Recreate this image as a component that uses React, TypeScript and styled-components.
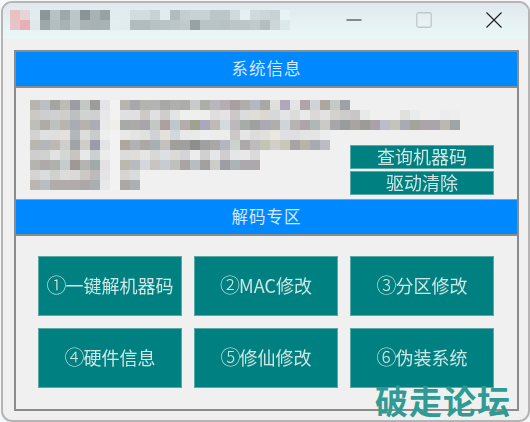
import React from 'react';
import styled, {createGlobalStyle} from 'styled-components';

const GlobalStyle = createGlobalStyle`
  html, body {
    margin: 0;
    padding: 0;
    background: #f4f8f8;
  }
`;

const Window = styled.div`
  position: relative;
  box-sizing: border-box;
  width: 529px;
  height: 421px;
  margin: 1px 0 0 1px;
  border: 2px solid #b6b4b4;
  border-radius: 11px;
  overflow: hidden;
  background: #f0f0f0;
  font-family: "Noto Sans CJK SC", "Liberation Sans", sans-serif;
`;

const TitleBar = styled.div`
  display: flex;
  align-items: stretch;
  justify-content: space-between;
  height: 36px;
  background: linear-gradient(#dfe8ea, #e6f1f4 50%, #ebf6f9);
`;

const TitleBlur = styled.div`
  display: flex;
  flex-direction: column;
  padding: 7px 0 0 7px;
`;

const WindowControls = styled.div`
  display: flex;
  margin-right: -1px;
`;

const ControlButton = styled.div`
  display: flex;
  align-items: center;
  justify-content: center;
  width: 70px;
  padding-bottom: 3px;
`;

const Panel = styled.div`
  box-sizing: border-box;
  height: 361px;
  margin: 11px 9px 0 11px;
  border: 2px solid #8b8b8b;
`;

const SectionHeader = styled.div<{$first?: boolean}>`
  display: flex;
  align-items: center;
  justify-content: center;
  box-sizing: border-box;
  height: ${p => (p.$first ? '36px' : '37px')};
  padding-bottom: 2px;
  background: #0088ff;
  background-clip: padding-box;
  color: #d4e9ff;
  font-size: 16.5px;
  letter-spacing: 1px;
  border-bottom: 2px solid #8b8b8b;
  border-top: ${p => (p.$first ? '0' : '1px solid #9a9a9a')};
`;

const InfoArea = styled.div`
  display: grid;
  box-sizing: border-box;
  height: 111px;
  padding: 12px 23px 4px 14px;
`;

const Mosaic = styled.div`
  grid-area: 1 / 1;
  display: flex;
  flex-direction: column;
`;

const MosaicRow = styled.div`
  display: flex;
`;

const Cell = styled.span.attrs<{$tone: string}>(p => ({
	style: {background: `#${p.$tone}`},
}))<{$tone: string}>`
  flex: none;
  width: 10px;
  height: 10px;
`;

const ActionStack = styled.div`
  grid-area: 1 / 1;
  align-self: end;
  justify-self: end;
  display: flex;
  flex-direction: column;
  gap: 2px;
  width: 144px;
`;

const TealButton = styled.div<{$tall?: boolean}>`
  display: flex;
  align-items: center;
  justify-content: center;
  box-sizing: border-box;
  height: ${p => (p.$tall ? '60px' : '24px')};
  padding-bottom: 3px;
  background: #008080;
  border: 1px solid #5aa9a6;
  color: #cfe6e4;
  font-size: 18px;
  white-space: nowrap;
  filter: blur(0.25px);
`;

const CircledDigit = styled.span`
  font-size: 20px;
  width: 19px;
  text-align: center;
  font-weight: 300;
`;

const ButtonGrid = styled.div`
  display: grid;
  grid-template-columns: repeat(3, 144px);
  grid-auto-rows: 60px;
  gap: 12px;
  padding: 20px 0 0 22px;
`;

const Watermark = styled.div`
  position: absolute;
  right: 17px;
  bottom: 1px;
  color: #2f9b94;
  font-size: 33px;
  font-weight: 700;
  line-height: 38px;
  letter-spacing: 1px;
  white-space: nowrap;
`;

const titleRows = [
	'eac0c4 e8d4d6 e0ecee 8c9698 b8c2c4 9ea8aa bcc6c8 8a9496 a8b2b4 98a2a2 e0ecee e0ecee d0dcde d0dcde c8d2d4 e0ecee b0bcbe c4ced0 c8d2d4 c8d2d4 bcc6c8 bcc6c8 d0dadc e4f0f2 d0dade ccd6d8 c8d2d4 e6f2f4',
	'e6c4c8 e8b0b4 e0e8ea 9ca8aa b4bec0 a8b4b4 bcc6c8 aab4b6 a8b2b4 a8b4b4 e2eef0 e0ecee b0bcbe b0bcbe b8c2c4 b8c4c6 bcc6c8 c0cacc 98a2a2 b8c4c6 b8c4c6 b8c2c4 bcc6c8 bcc6c8 c0cacc b4bec0 ccd6d8 dce8ea',
];

// left column (8 cells), gap cell, then the value column
const infoRows = [
	'b8b4ae bcc0c6 a4a4a0 bcbcb4 9c9ca4 c4c8c4 9c9c9c e4e4e8 f2f2f2 b8b4ae a8a8ac b4b4ae b4b4b4 a8a8a6 b0aeae acacaa c8cacc acaea8 b8b8bc b4aeb4 a8a0a0 b0aeaa b4b8c0 a8a8a8 e0e0da b0a8b8 e2e4e6 b0a4a8 d0d4d6 aca8a0 c4c8c6 a0a0a8',
	'ccc8c4 ccced0 ced0d2 d0cec8 bcc0c0 d0d4d0 d0d0d0 e8e8ea f2f2f2 e0e0e0 e0e0e0 ccc9c6 dfe0e2 cdcdcb e2e4e6 eef0ee eef0ee eeeeea e0dede e4e4e4 ccc8c8 dadcde e0dcd8 dcd8d0 d6d8dc e4e4e4 dcdcda e8eaea dcd8d8 e2e2e2 d4d2ce cccccc c8c6c8 e8eaea f0f0f0 f0f0f0 f0f0f0 e0e0dc e8ecec f0f0f0 f0f0f0 ececec eeeeee',
	'bcc0b8 b0aaa8 bcc2c0 b8b4b0 a8acb4 b8b2ac acacb4 eaeaea f0eeea a8aaaa acaaa8 a8a4ac c4c8c4 aca0a0 bcc8cc b4acac a0a290 aca8bc c0bab4 d4dae0 bcb8bc a8aca8 a0a0a0 aca8b4 b0aeaa ced4d8 b8b2b0 b0a4a8 aeb8b6 cccac6 a8a6a8 989c9c a8a4a0 9c9c96 aaa0a8 bcbccc c4c4bc aaaab4 a4a49a aca4a8 aca4ac bcb8b0 a0a4a4',
	'd4d2d0 dee0e2 e0dede e4e0dc b0b8bc dcdcd8 c8cacc eeeeee f2f2f2 e8e8e8 e4e4e4 e0e0dc d0d2d8 e4e0dc d0d8dc e8e8e8 e8eaea eeeeee ececec ececea ccc8ca e6e6e6 dcdcdc e0e0dc e8e8e0 e0e0e2 e0dee2 e4e4e4 e4e4e4 eceeee',
	'b8b6ae b4b6bc bcb8b4 d0cecc a0a4a8 d0ccc8 9c9ca8 e2e4e6 f2f2f2 aca8a0 b0b2b4 aca8a4 a8b0b4 c4c0bc a0a09a a0a0a0 8e8e8c a0a0a0 a8a8a8 b4b6c0 ccd2cc aca8ac bcbcbc c4c4b4 d0d0c8 c8c8b8 a8a4a4 b8b4a8 a8acb0 bcbcc4',
	'd0cecc d0d2d0 e2e2e2 d4d8d4 c8c4c0 e6e8ea ccd0d2 ececec f2f2f2 dcdcdc e0dcd8 e4e6e6 d8d8d6 dce0e4 dcdad6 d4d4d8 ececec d0d0d0 e4e6ea d0ccd0 e4e6e8 e8e8e8 dadada',
	'b4b4b0 aeaaaa b0b0ac c4ccce 9e9896 b4b4b2 a0aaaa e2e2e4 f2f2f2 bcb8ae b8bcc0 d4d8dc c8c4c0 c8ccd0 c0c0bc a8a4a4 b8bec0 a4a0a0 ccccc8 9c9ea4 acb4b8 aca8ac aca8ac',
	'd6d4d2 dadcde d0d0cc dcdcdc dcdad8 ccc8c6 bcbaba e4e4e6 f2f2f2 d8d4d0 d8dcde',
	'bcb6b0 b8bec4 b0acac b0acac b0acac aca8a8 a8aeb2 e8e8ea f2f2f2 aca8a4 acb0b4',
];

const gridLabels = [
	['①', '一键解机器码'],
	['②', 'MAC修改'],
	['③', '分区修改'],
	['④', '硬件信息'],
	['⑤', '修仙修改'],
	['⑥', '伪装系统'],
];

const MosaicLines = ({rows}: {rows: string[]}) => (
	<>
		{rows.map((row, r) => (
			<MosaicRow key={r}>
				{row.split(' ').map((tone, c) => <Cell key={c} $tone={tone} />)}
			</MosaicRow>
		))}
	</>
);

export default function App() {
	return (
		<Window>
			<GlobalStyle />
			<TitleBar>
				<TitleBlur>
					<MosaicLines rows={titleRows} />
				</TitleBlur>
				<WindowControls>
					<ControlButton>
						<svg width="16" height="16" viewBox="0 0 16 16"><path d="M0.5 8h15" stroke="#222" strokeWidth="1" fill="none" /></svg>
					</ControlButton>
					<ControlButton>
						<svg width="16" height="16" viewBox="0 0 16 16"><rect x="0.75" y="0.75" width="14.5" height="14.5" rx="2" stroke="#c2c8c9" strokeWidth="1.3" fill="none" /></svg>
					</ControlButton>
					<ControlButton>
						<svg width="16" height="16" viewBox="0 0 16 16"><path d="M0.5 0.5l15 15M15.5 0.5l-15 15" stroke="#1c1c1c" strokeWidth="1.1" fill="none" /></svg>
					</ControlButton>
				</WindowControls>
			</TitleBar>
			<Panel>
				<SectionHeader $first>系统信息</SectionHeader>
				<InfoArea>
					<Mosaic>
						<MosaicLines rows={infoRows} />
					</Mosaic>
					<ActionStack>
						<TealButton>查询机器码</TealButton>
						<TealButton>驱动清除</TealButton>
					</ActionStack>
				</InfoArea>
				<SectionHeader>解码专区</SectionHeader>
				<ButtonGrid>
					{gridLabels.map(([digit, label]) => (
						<TealButton key={label} $tall><CircledDigit>{digit}</CircledDigit>{label}</TealButton>
					))}
				</ButtonGrid>
			</Panel>
			<Watermark>破走论坛</Watermark>
		</Window>
	);
}
